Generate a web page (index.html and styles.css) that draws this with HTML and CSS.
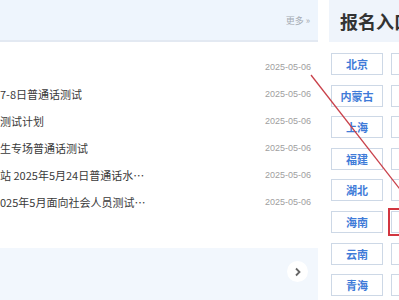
FILE: index.html
```html
<!DOCTYPE html>
<html lang="zh-CN">
<head>
  <meta charset="UTF-8">
  <meta name="viewport" content="width=device-width, initial-scale=1.0">
  <title>普通话测试</title>
  <link rel="stylesheet" href="styles.css">
</head>
<body>
  <div class="pagina">
    <!-- Columna de noticias -->
    <div class="noticias">
      <div class="cabecera">
        <a href="#" class="mas">更多 &raquo;</a>
      </div>
      <ul class="lista">
        <li><span class="titulo"></span><span class="fecha">2025-05-06</span></li>
        <li><span class="titulo">7-8日普通话测试</span><span class="fecha">2025-05-06</span></li>
        <li><span class="titulo">测试计划</span><span class="fecha">2025-05-06</span></li>
        <li><span class="titulo">生专场普通话测试</span><span class="fecha">2025-05-06</span></li>
        <li><span class="titulo">站 2025年5月24日普通话水平测试</span><span class="fecha">2025-05-06</span></li>
        <li><span class="titulo">025年5月面向社会人员测试安排</span><span class="fecha">2025-05-06</span></li>
      </ul>
      <div class="banda">
        <button class="siguiente">
          <svg width="8" height="10" viewBox="0 0 8 10"><path d="M2 1.5 L5.5 5 L2 8.5" fill="none" stroke="#666" stroke-width="1.8"/></svg>
        </button>
      </div>
    </div>

    <!-- Columna de entradas -->
    <div class="entradas">
      <div class="cabecera-entradas">
        <h2>报名入口</h2>
      </div>
      <div class="provincias">
        <a href="#">北京</a><a href="#">天津</a>
        <a href="#">内蒙古</a><a href="#">辽宁</a>
        <a href="#">上海</a><a href="#">江苏</a>
        <a href="#">福建</a><a href="#">江西</a>
        <a href="#">湖北</a><a href="#">湖南</a>
        <a href="#">海南</a><a href="#" class="marcado">重庆</a>
        <a href="#">云南</a><a href="#">西藏</a>
        <a href="#">青海</a><a href="#">宁夏</a>
      </div>
    </div>

    <!-- Línea de anotación -->
    <svg class="anotacion" width="399" height="300" viewBox="0 0 399 300">
      <line x1="311" y1="75" x2="420" y2="215" stroke="#c9414a" stroke-width="1.3"/>
    </svg>
  </div>
</body>
</html>
```

FILE: styles.css
```css
/* Reset */
* {
  margin: 0;
  padding: 0;
  box-sizing: border-box;
}

html, body {
  overflow: hidden;
}

body {
  background: #fff;
  color: #333;
  font-family: "Liberation Sans", "Noto Sans CJK SC", sans-serif;
  width: 399px;
  height: 300px;
}

.pagina {
  display: flex;
  gap: 11px;
  position: relative;
  height: 300px;
}

/* Noticias */
.noticias {
  width: 318px;
  flex-shrink: 0;
  display: flex;
  flex-direction: column;
}
.cabecera {
  height: 42px;
  background: #eef5fd;
  border-bottom: 2px solid #e3e9f2;
  display: flex;
  align-items: center;
  justify-content: flex-end;
  padding-right: 8px;
}
.mas {
  font-family: "Noto Sans CJK SC", sans-serif;
  font-size: 9px;
  color: #a5abb3;
  text-decoration: none;
}
.lista {
  list-style: none;
  padding-top: 11px;
}
.lista li {
  height: 27px;
  display: flex;
  align-items: center;
  justify-content: space-between;
  padding-right: 7px;
}
.titulo {
  font-family: "Noto Sans CJK SC", sans-serif;
  font-size: 11px;
  color: #3a3a3a;
  max-width: 147px;
  white-space: nowrap;
  overflow: hidden;
  text-overflow: ellipsis;
}
.fecha {
  font-size: 9px;
  color: #a0a0a0;
}
.banda {
  margin-top: auto;
  height: 52px;
  background: #f2f7fd;
  display: flex;
  align-items: center;
  justify-content: flex-end;
  padding: 0 10px 5px 0;
}
.siguiente {
  width: 21px;
  height: 21px;
  border-radius: 50%;
  border: none;
  background: #fff;
  display: flex;
  align-items: center;
  justify-content: center;
}

/* Entradas */
.entradas {
  flex-shrink: 0;
  width: 120px;
}
.cabecera-entradas {
  height: 42px;
  background: #eff4fb;
  display: flex;
  align-items: center;
  padding-left: 11px;
}
.cabecera-entradas h2 {
  font-family: "Noto Sans CJK SC", sans-serif;
  font-size: 18px;
  font-weight: bold;
  color: #333;
  white-space: nowrap;
  letter-spacing: 0;
}
.provincias {
  display: grid;
  grid-template-columns: 52px 52px;
  column-gap: 8px;
  row-gap: 9.6px;
  padding: 11px 0 0 2px;
}
.provincias a {
  height: 22px;
  border: 1px solid #cdd8e6;
  display: flex;
  align-items: center;
  justify-content: center;
  font-family: "Noto Sans CJK SC", sans-serif;
  font-size: 11px;
  font-weight: bold;
  color: #3f7bd8;
  text-decoration: none;
}
.provincias a.marcado {
  outline: 2px solid #d2353f;
  outline-offset: 1px;
}

/* Anotación */
.anotacion {
  position: absolute;
  left: 0;
  top: 0;
  pointer-events: none;
}
```
